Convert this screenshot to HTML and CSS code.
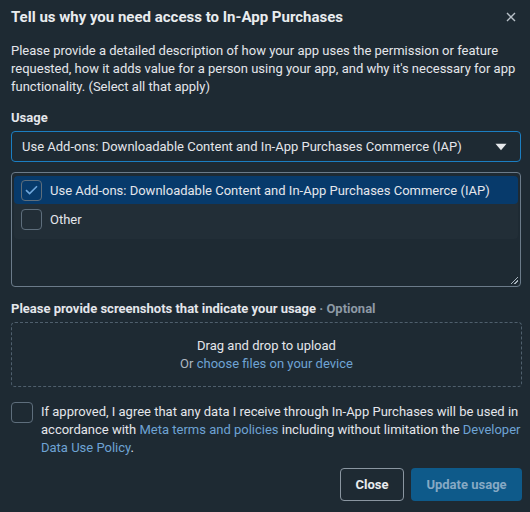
FILE: index.html
```html
<!DOCTYPE html>
<html>
<head>
<meta charset="utf-8">
<link rel="stylesheet" href="styles.css">
</head>
<body>
<div class="dialog">
  <div class="header">
    <h1 class="title">Tell us why you need access to In-App Purchases</h1>
    <button class="close-x" aria-label="Close">
      <svg width="10" height="10" viewBox="0 0 10 10"><path d="M1 1L9 9M9 1L1 9" stroke="#b8c0c8" stroke-width="1.4" fill="none"/></svg>
    </button>
  </div>
  <p class="desc">Please provide a detailed description of how your app uses the permission or feature requested, how it adds value for a person using your app, and why it's necessary for app functionality. (Select all that apply)</p>
  <div class="label">Usage</div>
  <div class="usage">
    <div class="select">
      <span class="select-text">Use Add-ons: Downloadable Content and In-App Purchases Commerce (IAP)</span>
      <svg class="caret" width="12" height="8" viewBox="0 0 12 8"><path d="M0.5 0.8H11.5L6 7.2Z" fill="#e6e9ec"/></svg>
    </div>
    <div class="textarea"><span class="grip"></span></div>
    <div class="menu">
      <div class="option selected">
        <span class="cb checked"><svg width="13" height="10" viewBox="0 0 13 10"><path d="M1 5.2L4.6 8.6L12 1.2" stroke="#6fa7dc" stroke-width="1.6" fill="none"/></svg></span>
        <span>Use Add-ons: Downloadable Content and In-App Purchases Commerce (IAP)</span>
      </div>
      <div class="option">
        <span class="cb"></span>
        <span>Other</span>
      </div>
    </div>
  </div>
  <div class="label label2">Please provide screenshots that indicate your usage <span class="optional">· Optional</span></div>
  <div class="drop">
    <div>Drag and drop to upload</div>
    <div class="muted">Or <a class="link">choose files on your device</a></div>
  </div>
  <div class="consent">
    <span class="cb big"></span>
    <p>If approved, I agree that any data I receive through In-App Purchases will be used in accordance with <a class="link">Meta terms and policies</a> including without limitation the <a class="link">Developer Data Use Policy</a>.</p>
  </div>
  <div class="footer">
    <button class="btn btn-close">Close</button>
    <button class="btn btn-primary">Update usage</button>
  </div>
</div>
</body>
</html>
```
FILE: styles.css
```css
html, body {
  margin: 0;
  padding: 0;
  background: #1e2a33;
}
body {
  font-family: Roboto, "Noto Sans", sans-serif;
  font-size: 13px;
  color: #e4e6eb;
  width: 530px;
  height: 512px;
  overflow: hidden;
}
.dialog {
  padding: 7px 8px 0 11px;
}
.header {
  display: flex;
  align-items: center;
  justify-content: space-between;
  height: 20px;
}
.title {
  margin: 0;
  font-size: 15px;
  font-weight: 700;
  line-height: 20px;
  color: #e9ecef;
}
.close-x {
  background: none;
  border: none;
  padding: 0;
  width: 22px;
  height: 20px;
  display: flex;
  align-items: center;
  justify-content: center;
}
.desc {
  margin: 15px 0 0;
  line-height: 18px;
  padding-right: 2px;
}
.label {
  margin-top: 13px;
  font-weight: 700;
  line-height: 18px;
}
.usage {
  position: relative;
  margin-top: 4px;
  width: 510px;
}
.select {
  height: 29px;
  border: 1px solid #1b7ec2;
  border-radius: 4px;
  display: flex;
  align-items: center;
  justify-content: space-between;
  padding: 0 13px 0 10px;
  background: #1e2a33;
}
.caret { margin-top: 1px; }
.textarea {
  position: relative;
  margin-top: 10px;
  height: 113px;
  border: 1px solid #6b7b8a;
  border-radius: 4px;
}
.grip {
  position: absolute;
  right: 2px;
  bottom: 2px;
  width: 7px;
  height: 7px;
  background: linear-gradient(135deg, transparent 45%, #a8b3bd 45%, #a8b3bd 55%, transparent 55%, transparent 70%, #a8b3bd 70%, #a8b3bd 80%, transparent 80%);
}
.menu {
  position: absolute;
  left: 3px;
  right: 3px;
  top: 45px;
  background: #222e37;
  border-radius: 4px;
  padding-bottom: 5px;
}
.option {
  display: flex;
  align-items: center;
  gap: 8px;
  height: 28px;
  padding-left: 7px;
  border-radius: 4px;
}
.option.selected {
  background: #073a6b;
}
.option + .option { height: 30px; }
.cb {
  box-sizing: border-box;
  width: 21px;
  height: 21px;
  border: 1.5px solid #5e6e7c;
  border-radius: 4px;
  display: inline-flex;
  align-items: center;
  justify-content: center;
  flex: none;
}
.label2 { margin-top: 13px; }
.optional { color: #8d99a5; }
.drop {
  margin-top: 4px;
  height: 63px;
  border: 1px dashed #4f5f6d;
  border-radius: 4px;
  display: flex;
  flex-direction: column;
  align-items: center;
  justify-content: center;
  line-height: 18px;
  text-align: center;
}
.muted { color: #aeb7c0; }
.link { color: #6ea3d4; text-decoration: none; }
.consent {
  display: flex;
  gap: 8px;
  margin-top: 15px;
}
.cb.big { width: 22px; height: 21px; }
.consent p {
  margin: 1px 0 0;
  line-height: 18px;
}
.footer {
  display: flex;
  justify-content: flex-end;
  gap: 7px;
  margin-top: 11px;
}
.btn {
  font-family: inherit;
  font-size: 13px;
  font-weight: 700;
  height: 33px;
  border-radius: 4px;
  padding: 0;
  white-space: nowrap;
}
.btn-close {
  background: transparent;
  color: #e9ecef;
  border: 1px solid #8a96a1;
  width: 64px;
}
.btn-primary {
  background: #0e5a8a;
  color: #86a9c4;
  border: none;
  width: 111px;
}
```
